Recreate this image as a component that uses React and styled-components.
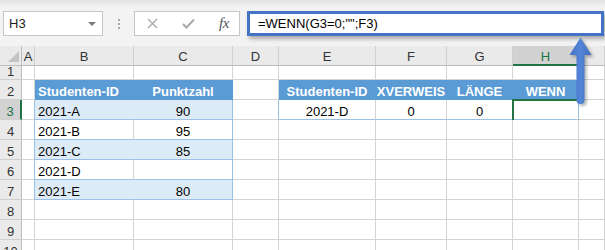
import React from 'react';
import styled, { createGlobalStyle } from 'styled-components';

const GlobalStyle = createGlobalStyle`
  html, body { margin: 0; padding: 0; background: #fff; overflow: hidden; }
  body { font-family: "Liberation Sans", Arial, sans-serif; }
`;

const GRID = '#d4d4d4';
const TBL = '#9bc2e6';
const HEAD = '#5b9bd5';
const BAND = '#ddebf7';
const GREEN = '#217346';

const Page = styled.div`
  position: relative;
  width: 605px;
  height: 250px;
  overflow: hidden;
  display: flex;
  flex-direction: column;
  font-family: "Liberation Sans", Arial, sans-serif;
  font-size: 13px;
  color: #000;
`;

const Toolbar = styled.div`
  height: 46px;
  flex: none;
  box-sizing: border-box;
  display: flex;
  align-items: flex-start;
  padding: 11px 1px 0 3px;
  background: linear-gradient(#e2e2e2, #f3f3f3 7px);
`;

const NameBox = styled.div`
  width: 100px;
  height: 25px;
  box-sizing: border-box;
  border: 1px solid #c6c6c6;
  background: #fff;
  display: flex;
  align-items: center;
  justify-content: space-between;
  padding: 0 6px 0 5px;
  color: #222;
`;

const DropTri = styled.span`
  width: 0;
  height: 0;
  border-left: 4px solid transparent;
  border-right: 4px solid transparent;
  border-top: 4px solid #7a7a7a;
`;

const Dots = styled.div`
  width: 31px;
  height: 25px;
  display: flex;
  flex-direction: column;
  align-items: center;
  justify-content: center;
  gap: 2px;
`;

const Dot = styled.span`
  width: 2px;
  height: 2px;
  background: #a8a8a8;
`;

const FxBox = styled.div`
  width: 106px;
  height: 25px;
  box-sizing: border-box;
  border: 1px solid #c6c6c6;
  background: #fff;
  display: flex;
  align-items: center;
  padding-left: 12px;
  gap: 24px;
`;

const FxText = styled.span`
  font-family: "Liberation Serif", "Times New Roman", serif;
  font-style: italic;
  font-size: 15px;
  color: #555;
  letter-spacing: -0.5px;
`;

const FormulaBar = styled.div`
  flex: 1;
  margin-left: 7px;
  height: 25px;
  box-sizing: border-box;
  border: 3px solid #4472c4;
  background: #fff;
  display: flex;
  align-items: center;
  padding-left: 8px;
  box-shadow: 2px 3px 4px rgba(0, 0, 0, 0.3);
  white-space: pre;
`;

const Sheet = styled.div`
  display: grid;
  grid-template-columns: 22px 13px 99px 99px 46px 97px 71px 66px 66px 26px;
  grid-template-rows: 20px 14px repeat(9, 20px);
`;

const Corner = styled.div`
  background: #eaeaea;
  box-sizing: border-box;
  border-right: 1px solid #c0c0c0;
  border-bottom: 1px solid #bdbdbd;
  display: flex;
  align-items: flex-end;
  justify-content: flex-end;
  padding: 0 2px 3px 0;
`;

const ColHead = styled.div`
  box-sizing: border-box;
  background: ${(p) => (p.$sel ? '#d2d2d2' : '#eaeaea')};
  color: ${(p) => (p.$sel ? GREEN : '#333')};
  border-right: 1px solid #cfcfcf;
  border-bottom: ${(p) => (p.$sel ? `2px solid ${GREEN}` : '1px solid #bdbdbd')};
  display: flex;
  align-items: flex-end;
  justify-content: center;
  line-height: 15px;
  padding-bottom: ${(p) => (p.$sel ? 0 : 1)}px;
`;

const RowHead = styled.div`
  box-sizing: border-box;
  background: ${(p) => (p.$sel ? '#d2d2d2' : '#eaeaea')};
  color: ${(p) => (p.$sel ? GREEN : '#333')};
  border-right: ${(p) => (p.$sel ? `2px solid ${GREEN}` : '1px solid #bdbdbd')};
  border-bottom: 1px solid #d0d0d0;
  display: flex;
  align-items: flex-end;
  justify-content: center;
  line-height: 15px;
  overflow: hidden;
`;

const fills = {
  plain: { bg: '#fff', color: '#000', weight: 400 },
  band: { bg: BAND, color: '#000', weight: 400 },
  head: { bg: HEAD, color: '#fff', weight: 700 },
};

const Cell = styled.div`
  position: relative;
  box-sizing: border-box;
  background: ${(p) => fills[p.$kind].bg};
  color: ${(p) => fills[p.$kind].color};
  font-weight: ${(p) => fills[p.$kind].weight};
  border-right: 1px solid ${(p) => p.$rc || GRID};
  border-bottom: 1px solid ${(p) => p.$bc || GRID};
  display: flex;
  align-items: flex-end;
  justify-content: ${(p) => (p.$align === 'center' ? 'center' : 'flex-start')};
  padding: 0 3px;
  line-height: 15px;
  white-space: nowrap;
`;

const Selection = styled.div`
  position: absolute;
  left: -1px;
  top: -1px;
  width: 69px;
  height: 23px;
  box-sizing: border-box;
  border: 2px solid ${GREEN};
  pointer-events: none;
`;

const FillHandle = styled.span`
  position: absolute;
  left: 63px;
  top: 17px;
  width: 7px;
  height: 7px;
  box-sizing: border-box;
  background: ${GREEN};
  border: 1px solid #fff;
`;

const Arrow = styled.svg`
  position: absolute;
  left: 560px;
  top: 30px;
  filter: drop-shadow(2px 2px 1.5px rgba(0, 0, 0, 0.3));
`;

const COLS = ['A', 'B', 'C', 'D', 'E', 'F', 'G', 'H', ''];

const emptyRow = () =>
  COLS.map(() => ({ kind: 'plain' }));

function buildRows() {
  const rows = [];
  for (let r = 1; r <= 10; r++) rows.push(emptyRow());
  // table 1: B2:C7 (indices 1,2)
  const t1 = [
    ['Studenten-ID', 'Punktzahl'],
    ['2021-A', '90'],
    ['2021-B', '95'],
    ['2021-C', '85'],
    ['2021-D', ''],
    ['2021-E', '80'],
  ];
  t1.forEach(([b, c], i) => {
    const row = rows[i + 1];
    if (i === 0) {
      row[1] = { kind: 'head', text: b, rc: HEAD, bc: HEAD };
      row[2] = { kind: 'head', text: c, align: 'center', rc: HEAD, bc: HEAD };
    } else {
      const band = i % 2 === 1;
      row[0] = { kind: 'plain', rc: TBL };
      row[1] = { kind: band ? 'band' : 'plain', text: b, rc: band ? BAND : GRID, bc: TBL };
      row[2] = { kind: band ? 'band' : 'plain', text: c, align: 'center', rc: TBL, bc: TBL };
    }
  });
  // table 2: E2:H3 (indices 4..7)
  const heads = ['Studenten-ID', 'XVERWEIS', 'LÄNGE', 'WENN'];
  heads.forEach((h, j) => {
    rows[1][4 + j] = { kind: 'head', text: h, align: 'center', rc: HEAD, bc: HEAD };
  });
  const vals = ['2021-D', '0', '0', ''];
  rows[2][3] = { kind: 'plain', rc: TBL };
  vals.forEach((v, j) => {
    rows[2][4 + j] = {
      kind: 'plain',
      text: v,
      align: 'center',
      rc: j === 3 ? TBL : GRID,
      bc: TBL,
      selected: j === 3,
    };
  });
  return rows;
}

const rows = buildRows();

export default function App() {
  return (
    <Page>
      <GlobalStyle />
      <Toolbar>
        <NameBox>
          <span>H3</span>
          <DropTri />
        </NameBox>
        <Dots>
          <Dot />
          <Dot />
          <Dot />
        </Dots>
        <FxBox>
          <svg width="11" height="11" viewBox="0 0 11 11">
            <path d="M1 1 L10 10 M10 1 L1 10" stroke="#a9a9a9" strokeWidth="1.4" fill="none" />
          </svg>
          <svg width="13" height="11" viewBox="0 0 13 11">
            <path d="M1 6 L4.5 9.5 L12 1.5" stroke="#a9a9a9" strokeWidth="2" fill="none" />
          </svg>
          <FxText>fx</FxText>
        </FxBox>
        <FormulaBar>=WENN(G3=0;"";F3)</FormulaBar>
      </Toolbar>
      <Sheet>
        <Corner>
          <svg width="11" height="11" viewBox="0 0 11 11">
            <path d="M11 0 L11 11 L0 11 Z" fill="#c3c3c3" />
          </svg>
        </Corner>
        {COLS.map((c, i) => (
          <ColHead key={'h' + i} $sel={c === 'H'}>
            {c}
          </ColHead>
        ))}
        {rows.map((row, r) => (
          <React.Fragment key={'r' + r}>
            <RowHead $sel={r === 2}>{r + 1}</RowHead>
            {row.map((cell, c) => (
              <Cell
                key={c}
                $kind={cell.kind}
                $align={cell.align}
                $rc={cell.rc}
                $bc={cell.bc}
              >
                {cell.text}
                {cell.selected && (
                  <Selection>
                    <FillHandle />
                  </Selection>
                )}
              </Cell>
            ))}
          </React.Fragment>
        ))}
      </Sheet>
      <Arrow width="40" height="80" viewBox="0 0 40 80">
        <defs>
          <linearGradient id="arw" x1="0" x2="1" y1="0" y2="0">
            <stop offset="0" stopColor="#4373c6" />
            <stop offset="0.5" stopColor="#5285d8" />
            <stop offset="1" stopColor="#3f6dbd" />
          </linearGradient>
        </defs>
        <path
          d="M20.5 7.5 L31.5 25 L24.5 25 L24.5 70 A4 4 0 0 1 16.5 70 L16.5 25 L9.5 25 Z"
          fill="url(#arw)"
        />
      </Arrow>
    </Page>
  );
}
